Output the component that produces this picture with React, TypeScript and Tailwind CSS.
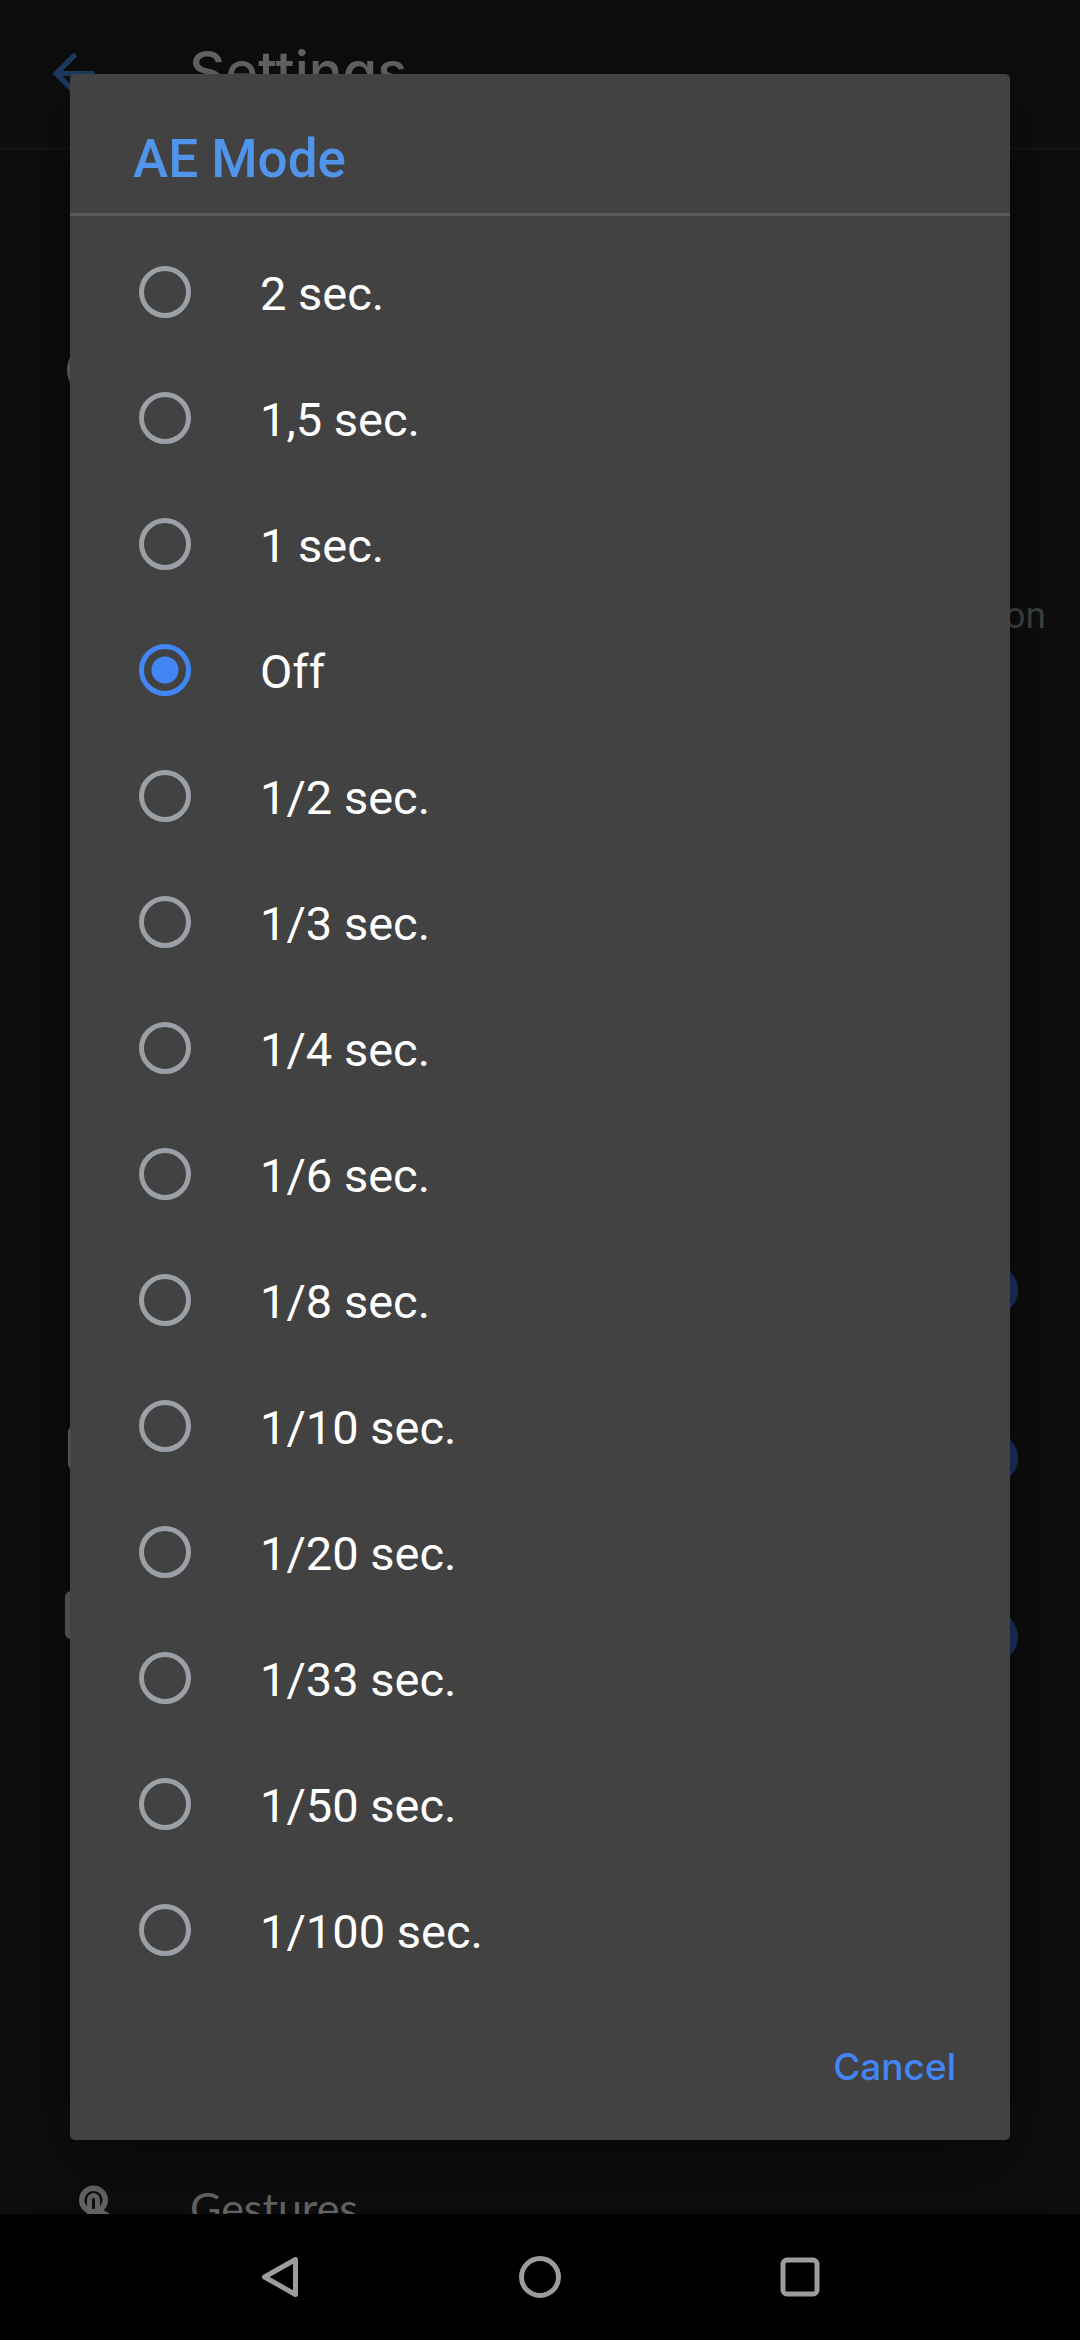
import { useState } from 'react';
import { MdArrowBack } from 'react-icons/md';

const OPTIONS = [
    '2 sec.',
    '1,5 sec.',
    '1 sec.',
    'Off',
    '1/2 sec.',
    '1/3 sec.',
    '1/4 sec.',
    '1/6 sec.',
    '1/8 sec.',
    '1/10 sec.',
    '1/20 sec.',
    '1/33 sec.',
    '1/50 sec.',
    '1/100 sec.',
];

function SwitchRow({ icon, className }: { icon?: React.ReactNode; className: string }) {
    return (
        <div className={`flex items-center justify-between pl-[60px] pr-[62px] ${className}`}>
            <span className="w-16 flex justify-start">{icon}</span>
            <span className="w-[94px] h-8 rounded-full bg-[#12233f] flex items-center justify-end">
                <span className="w-[52px] h-[52px] rounded-full bg-[#18305a]" />
            </span>
        </div>
    );
}

function GestureIcon() {
    return (
        <svg width="63" height="63" viewBox="0 0 63 63" fill="none" stroke="#646464">
            <circle cx="31.500" cy="24" r="11.800" strokeWidth="5.400" />
            <path d="M27.500 48V23.500a4 4 0 0 1 8 0V48" strokeWidth="5" />
            <path d="M36 31l14 8v10H36z" fill="#646464" stroke="none" />
        </svg>
    );
}

function SettingsPage() {
    return (
        <div className="flex flex-col h-full" aria-hidden="true">
            <header className="h-[150px] shrink-0 flex items-center pl-[42px] border-b-[3px] border-[#141516]">
                <MdArrowBack className="w-[63px] h-[63px] text-[#1d3a61]" />
                <h1 className="pl-[84px] pb-1 font-['Inter',sans-serif] text-[56px] leading-none font-medium text-[#646464]">Settings</h1>
            </header>

            {/* LIST */}
            <div className="flex flex-col shrink-0">
                <div className="h-[440px] flex items-center pl-[67px]">
                    <span className="w-[52px] h-[52px] rounded-full border-[6px] border-[#646464]" />
                </div>
                <div className="h-[50px] flex items-center justify-end pr-[34px] font-['Roboto',sans-serif] text-[37px] leading-none text-[#3e4144]">
                    on
                </div>
                <SwitchRow className="mt-[566px] h-[168px]" />
                <SwitchRow
                    className="h-[168px]"
                    icon={<span className="ml-2 mb-5 w-11 h-11 rounded-md border-[5px] border-[#646464]" />}
                />
                <SwitchRow
                    className="h-[190px]"
                    icon={<span className="ml-[5px] mb-11 w-[52px] h-12 rounded-md bg-[#5c5c5c]" />}
                />
            </div>
            <div className="h-[63px] mt-[444px] shrink-0 flex items-center pl-[62px]">
                <GestureIcon />
                <span className="pl-[65px] font-['Lato',sans-serif] text-[43px] leading-none text-[#646464]">Gestures</span>
            </div>
        </div>
    );
}

function AeModeDialog() {
    const [selected, setSelected] = useState('Off');

    return (
        <div
            role="dialog"
            aria-labelledby="ae-title"
            className="w-full bg-[#424242] rounded-[5px] shadow-[0_24px_64px_rgba(0,0,0,0.35)] font-['Roboto',sans-serif]"
        >
            <h2
                id="ae-title"
                className="pl-[63px] pt-[55px] pb-6 text-[53px] leading-[60px] font-medium text-[#5094eb] border-b-[3px] border-[#5a5a5a]"
            >
                AE Mode
            </h2>

            <div role="radiogroup" aria-labelledby="ae-title" className="pt-[13px]">
                {OPTIONS.map((option) => (
                    <label key={option} className="flex items-center h-[126px] pl-[69px] cursor-pointer">
                        <input
                            type="radio"
                            name="ae-mode"
                            value={option}
                            checked={selected === option}
                            onChange={() => setSelected(option)}
                            className="appearance-none w-[52px] h-[52px] shrink-0 rounded-full border-[5px] border-[#9aa0a6] checked:border-[#4285f4] checked:bg-[radial-gradient(circle,#4285f4_13px,transparent_14px)]"
                        />
                        <span className="pl-[69px] pt-0.5 text-[47px] leading-none text-white">{option}</span>
                    </label>
                ))}
            </div>

            <div className="h-[147px] flex items-center justify-end pr-[34px]">
                <button
                    type="button"
                    className="px-5 py-4 font-['Inter',sans-serif] text-[37px] leading-none font-medium text-[#4285f4]"
                >
                    Cancel
                </button>
            </div>
        </div>
    );
}

function NavigationBar() {
    return (
        <nav className="h-[126px] shrink-0 bg-black flex items-center justify-center text-[#9c9c9c]">
            <button type="button" aria-label="Back" className="w-[260px] h-full flex items-center justify-center">
                <svg width="48" height="48" viewBox="0 0 48 48" fill="none" stroke="currentColor" strokeWidth="5" strokeLinejoin="round">
                    <path d="M39.500 6.500v35L8.500 24z" />
                </svg>
            </button>
            <button type="button" aria-label="Home" className="w-[260px] h-full flex items-center justify-center">
                <svg width="48" height="48" viewBox="0 0 48 48" fill="none" stroke="currentColor" strokeWidth="5">
                    <circle cx="24" cy="24" r="18.500" />
                </svg>
            </button>
            <button type="button" aria-label="Recent apps" className="w-[260px] h-full flex items-center justify-center">
                <svg width="48" height="48" viewBox="0 0 48 48" fill="none" stroke="currentColor" strokeWidth="5">
                    <rect x="7" y="7" width="34" height="34" rx="4" />
                </svg>
            </button>
        </nav>
    );
}

export default function App() {
    return (
        <div className="h-screen flex flex-col bg-[#0d0d0d]">
            <main className="relative flex-1 min-h-0 overflow-hidden">
                <SettingsPage />
                <div className="absolute inset-0 flex items-center px-[70px]">
                    <AeModeDialog />
                </div>
            </main>
            <NavigationBar />
        </div>
    );
}
